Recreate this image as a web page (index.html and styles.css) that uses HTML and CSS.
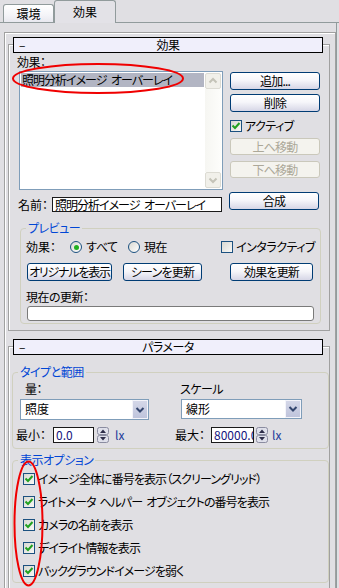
FILE: index.html
```html
<!DOCTYPE html>
<html lang="ja">
<head>
	<title>環境と効果</title>
	<meta charset="UTF-8">
	<link rel="stylesheet" href="styles.css">
</head>
<body>
	<div class="tabs">
		<div class="tab">環境</div>
		<div class="tab active">効果</div>
	</div>

	<div class="panel">
		<div class="page">

			<div class="rollout-title"><span class="dash">–</span><span>効果</span><span></span></div>
			<div class="rollout-body effects">
				<div class="label">効果：</div>
				<div class="effects-main">
					<div class="listbox">
						<div class="list-items">
							<div class="list-item selected">照明分析イメージ オーバーレイ</div>
						</div>
						<div class="vscroll">
							<div class="sbtn"><svg width="14" height="14" viewBox="0 0 14 14"><path d="M3.5 8.5 L7 5 L10.5 8.5" fill="none" stroke="#c4c3b8" stroke-width="2"/></svg></div>
							<div class="strack"></div>
							<div class="sbtn"><svg width="14" height="14" viewBox="0 0 14 14"><path d="M3.5 5.5 L7 9 L10.5 5.5" fill="none" stroke="#c4c3b8" stroke-width="2"/></svg></div>
						</div>
					</div>
					<div class="side">
						<button class="btn">追加...</button>
						<button class="btn gap-s">削除</button>
						<div class="check active-check"><span class="box"><svg width="10" height="10" viewBox="0 0 10 10"><path d="M1.5 4.5 L4 7 L8.5 2" fill="none" stroke="#21a121" stroke-width="2"/></svg></span>アクティブ</div>
						<button class="btn up" disabled>上へ移動</button>
						<button class="btn down" disabled>下へ移動</button>
					</div>
				</div>
				<div class="name-row">
					<div class="name-field">
						<span class="name-label">名前：</span>
						<div class="input name-input">照明分析イメージ オーバーレイ</div>
					</div>
					<button class="btn merge">合成</button>
				</div>

				<fieldset class="group preview">
					<legend>プレビュー</legend>
					<div class="pv-opts">
						<span class="pv-label">効果：</span>
						<span class="radio r-all"><span class="dot on"></span>すべて</span>
						<span class="radio r-cur"><span class="dot"></span>現在</span>
						<span class="check"><span class="box"></span>インタラクティブ</span>
					</div>
					<div class="pv-buttons">
						<button class="btn b-orig">オリジナルを表示</button>
						<button class="btn b-scene">シーンを更新</button>
						<button class="btn b-fx">効果を更新</button>
					</div>
					<div class="label pv-cur">現在の更新：</div>
					<div class="progress"></div>
				</fieldset>
			</div>

			<div class="rollout-title second"><span class="dash">–</span><span>パラメータ</span><span></span></div>
			<div class="rollout-body params">
				<fieldset class="group range">
					<legend>タイプと範囲</legend>
					<div class="range-grid">
						<span class="lbl-amount">量：</span>
						<span class="lbl-scale">スケール</span>
						<div class="select sel-amount">
							<span class="select-text">照度</span>
							<span class="select-arrow"><svg width="10" height="8" viewBox="0 0 10 8"><path d="M1.5 2 L5 5.5 L8.5 2" fill="none" stroke="#34466e" stroke-width="2"/></svg></span>
						</div>
						<div class="select sel-scale">
							<span class="select-text">線形</span>
							<span class="select-arrow"><svg width="10" height="8" viewBox="0 0 10 8"><path d="M1.5 2 L5 5.5 L8.5 2" fill="none" stroke="#34466e" stroke-width="2"/></svg></span>
						</div>
						<div class="spin-row">
							<span class="spin-label">最小：</span>
							<div class="input num n-min">0.0</div>
							<span class="spinner"><svg width="12" height="16" viewBox="0 0 12 16"><rect x="0.5" y="0.5" width="11" height="7" rx="2" fill="#dfe0ea" stroke="#8a8ca0"/><rect x="0.5" y="8.5" width="11" height="7" rx="2" fill="#dfe0ea" stroke="#8a8ca0"/><path d="M3 6 L6 2.5 L9 6 Z" fill="#2c2c48"/><path d="M3 10 L6 13.5 L9 10 Z" fill="#2c2c48"/></svg></span>
							<span class="unit">lx</span>
						</div>
						<div class="spin-row">
							<span class="spin-label max">最大：</span>
							<div class="input num n-max">80000.0</div>
							<span class="spinner s-max"><svg width="12" height="16" viewBox="0 0 12 16"><rect x="0.5" y="0.5" width="11" height="7" rx="2" fill="#dfe0ea" stroke="#8a8ca0"/><rect x="0.5" y="8.5" width="11" height="7" rx="2" fill="#dfe0ea" stroke="#8a8ca0"/><path d="M3 6 L6 2.5 L9 6 Z" fill="#2c2c48"/><path d="M3 10 L6 13.5 L9 10 Z" fill="#2c2c48"/></svg></span>
							<span class="unit u-max">lx</span>
						</div>
					</div>
				</fieldset>

				<fieldset class="group options">
					<legend>表示オプション</legend>
					<div class="opt"><span class="box"><svg width="10" height="10" viewBox="0 0 10 10"><path d="M1.5 4.5 L4 7 L8.5 2" fill="none" stroke="#21a121" stroke-width="2"/></svg></span>イメージ全体に番号を表示（スクリーングリッド）</div>
					<div class="opt"><span class="box"><svg width="10" height="10" viewBox="0 0 10 10"><path d="M1.5 4.5 L4 7 L8.5 2" fill="none" stroke="#21a121" stroke-width="2"/></svg></span>ライトメータ ヘルパー オブジェクトの番号を表示</div>
					<div class="opt"><span class="box"><svg width="10" height="10" viewBox="0 0 10 10"><path d="M1.5 4.5 L4 7 L8.5 2" fill="none" stroke="#21a121" stroke-width="2"/></svg></span>カメラの名前を表示</div>
					<div class="opt"><span class="box"><svg width="10" height="10" viewBox="0 0 10 10"><path d="M1.5 4.5 L4 7 L8.5 2" fill="none" stroke="#21a121" stroke-width="2"/></svg></span>デイライト情報を表示</div>
					<div class="opt"><span class="box"><svg width="10" height="10" viewBox="0 0 10 10"><path d="M1.5 4.5 L4 7 L8.5 2" fill="none" stroke="#21a121" stroke-width="2"/></svg></span>バックグラウンドイメージを弱く</div>
				</fieldset>
			</div>

		</div>
	</div>

	<!-- red marks drawn over the screenshot -->
	<svg class="marks" width="339" height="588" viewBox="0 0 339 588">
		<ellipse cx="98" cy="78.5" rx="85" ry="14.5" fill="none" stroke="#f00000" stroke-width="2"/>
		<ellipse cx="28.5" cy="523.5" rx="14" ry="62" fill="none" stroke="#f00000" stroke-width="2"/>
	</svg>
</body>
</html>
```

FILE: styles.css
```css
* {
	box-sizing: border-box;
}

body {
	margin: 0;
	width: 339px;
	height: 588px;
	overflow: hidden;
	position: relative;
	background-color: #e0dfe3;
	color: #000000;
	font-family: "Noto Sans CJK JP", "Liberation Sans", sans-serif;
	font-size: 12px;
	line-height: 14px;
	letter-spacing: -0.5px;
	font-feature-settings: "palt";
}

button {
	font: inherit;
	letter-spacing: -0.8px;
	font-feature-settings: "palt";
}

/* tabs */

.tabs {
	display: flex;
	align-items: flex-end;
	height: 23px;
	padding-left: 3px;
	border-bottom: 1px solid #919b9c;
}

.tab {
	width: 51px;
	height: 18px;
	border: 1px solid #919b9c;
	border-bottom: none;
	border-radius: 3px 3px 0 0;
	background: linear-gradient(#ffffff, #f4f4f8 60%, #e8e8ef);
	text-align: center;
	line-height: 18px;
	letter-spacing: 0;
}

.tab.active {
	width: 62px;
	height: 23px;
	margin-bottom: -1px;
	background: #e3e2e7;
	line-height: 22px;
}

.panel {
	width: 337px;
	height: 565px;
	padding-top: 9px;
	border-right: 1px solid #919b9c;
}

.page {
	margin-left: 4px;
	width: 332px;
	height: 556px;
	padding-top: 4px;
	border: 1px solid #a0a0a0;
	border-bottom: none;
	box-shadow: inset 1px 1px 0 #ffffff;
}

/* rollouts */

.rollout-title {
	position: relative;
	z-index: 1;
	display: grid;
	grid-template-columns: 20px 1fr 20px;
	margin-left: 8px;
	width: 310px;
	height: 16px;
	border: 1px solid #000000;
	background-color: #f0effb;
	text-align: center;
}

.rollout-title .dash {
	text-align: left;
	padding-left: 5px;
}

.rollout-title.second {
	margin-top: 8px;
}

.rollout-body {
	width: 322px;
	margin: -9px 0 0 3px;
	border: 1px solid #a0a0a0;
	box-shadow: inset 1px 1px 0 #ffffff;
}

.effects {
	padding: 10px 0 6px 8px;
}

.params {
	height: 242px;
	border-bottom: none;
	padding: 18px 0 0 3px;
}

.label {
	height: 14px;
}

/* effect list */

.effects-main {
	display: flex;
	margin-top: 2px;
}

.listbox {
	display: flex;
	width: 204px;
	height: 119px;
	margin-left: 2px;
	border: 1px solid #7f9db9;
	background-color: #ffffff;
}

.list-items {
	flex: 1;
	min-width: 0;
	padding: 1px;
}

.list-item {
	height: 14px;
	padding-left: 1px;
	white-space: nowrap;
	letter-spacing: -1px;
	word-spacing: 3px;
}

.list-item.selected {
	background-color: #b2b5c3;
}

.vscroll {
	display: flex;
	flex-direction: column;
	width: 16px;
	margin-right: 1px;
	padding: 1px 0;
}

.sbtn {
	display: flex;
	align-items: center;
	justify-content: center;
	height: 16px;
	border: 1px solid #dcdbd3;
	border-radius: 2px;
	background-color: #f1f0ea;
}

.strack {
	flex: 1;
	background: linear-gradient(to right, #f6f6f2, #fdfdfb);
}

.side {
	display: flex;
	flex-direction: column;
	width: 90px;
	margin-left: 7px;
	padding-top: 1px;
}

.btn {
	display: block;
	width: 100%;
	height: 18px;
	padding: 0;
	border: 1px solid #003c74;
	border-radius: 3px;
	background: linear-gradient(#ffffff, #f6f6fa 45%, #d6d6e6);
	color: #000000;
	line-height: 16px;
	white-space: nowrap;
	overflow: hidden;
}

.btn:disabled {
	height: 17px;
	border-color: #cac8bb;
	background: #f4f3ee;
	color: #aca899;
}

.gap-s {
	margin-top: 4px;
}

.btn.up {
	margin-top: 5px;
}

.btn.down {
	margin-top: 6px;
}

.check {
	display: flex;
	align-items: center;
	gap: 3px;
	height: 14px;
	white-space: nowrap;
}

.active-check {
	margin-top: 7px;
}

.box {
	display: flex;
	align-items: center;
	justify-content: center;
	flex: none;
	width: 12px;
	height: 12px;
	border: 1px solid #1c5180;
	background: linear-gradient(135deg, #d8d8d2, #f8f8f6);
}

/* name */

.name-row {
	display: flex;
	margin-top: 2px;
}

.name-field {
	display: flex;
	align-items: center;
	margin-top: 5px;
}

.name-label {
	width: 35px;
	padding-left: 1px;
	letter-spacing: 0;
}

.input {
	height: 15px;
	border: 1px solid #1a1a1a;
	background-color: #ffffff;
	padding-left: 2px;
	line-height: 13px;
	white-space: nowrap;
	overflow: hidden;
}

.name-input {
	width: 170px;
	letter-spacing: -1px;
	word-spacing: 3px;
}

.btn.merge {
	width: 90px;
	margin-left: 7px;
}

/* group boxes */

.group {
	margin: 0;
	border: 1px solid #d0d0bf;
	border-radius: 4px;
	min-width: 0;
}

.group legend {
	padding: 0 2px;
	color: #0046d5;
	line-height: 14px;
}

.preview {
	width: 301px;
	margin: 9px 0 0 3px;
	padding: 5px 5px 2px 5px;
}

.pv-opts {
	display: flex;
	align-items: center;
	height: 14px;
}

.pv-label {
	width: 46px;
	letter-spacing: 0;
}

.radio {
	display: flex;
	align-items: center;
	gap: 4px;
}

.r-all {
	width: 60px;
}

.r-cur {
	width: 97px;
}

.dot {
	display: flex;
	align-items: center;
	justify-content: center;
	width: 12px;
	height: 12px;
	border: 1px solid #1c5180;
	border-radius: 50%;
	background: linear-gradient(135deg, #d8d8d2, #ffffff);
}

.dot.on::after {
	content: "";
	width: 5px;
	height: 5px;
	border-radius: 50%;
	background-color: #21b021;
}

.pv-buttons {
	display: flex;
	margin-top: 9px;
}

.b-orig {
	width: 85px;
	margin-left: 1px;
	letter-spacing: -1.2px;
}

.b-scene {
	width: 79px;
	margin-left: 11px;
}

.b-fx {
	width: 83px;
	margin-left: 28px;
}

.pv-cur {
	margin-top: 9px;
}

.progress {
	width: 287px;
	height: 15px;
	margin: 2px 0 0 1px;
	border: 1px solid #7a7a7a;
	border-radius: 3px;
	background-color: #ffffff;
}

/* parameters */

.range {
	width: 317px;
	padding: 3px 0 5px 3px;
}

.range legend {
	margin-left: 2px;
}

.range-grid {
	display: grid;
	grid-template-columns: 159px 1fr;
}

.lbl-amount {
	margin-left: 9px;
}

.lbl-scale {
	margin-left: 5px;
}

.select {
	display: flex;
	margin-top: 3px;
	border: 1px solid #7f9db9;
	background-color: #ffffff;
}

.sel-amount {
	width: 129px;
	height: 21px;
	margin-left: 4px;
}

.sel-scale {
	width: 121px;
	height: 20px;
	margin-left: 6px;
}

.select-text {
	flex: 1;
	padding-left: 4px;
	line-height: 18px;
	letter-spacing: 0;
}

.select-arrow {
	display: flex;
	align-items: center;
	justify-content: center;
	width: 16px;
	border: 1px solid #f4f4fa;
	background: linear-gradient(#d4d7e8, #bfc4dc);
}

.spin-row {
	display: flex;
	align-items: center;
	height: 16px;
	margin-top: 7px;
}

.spin-label {
	width: 37px;
	letter-spacing: 0;
}

.spin-label.max {
	width: 36px;
}

.num {
	height: 16px;
	color: #14147e;
	line-height: 14px;
	letter-spacing: 0;
}

.n-min {
	width: 41px;
}

.n-max {
	width: 43px;
}

.spinner {
	display: flex;
	margin-left: 3px;
}

.s-max {
	margin-left: 2px;
}

.unit {
	margin-left: 6px;
	color: #1f3b9a;
	letter-spacing: 0;
}

.u-max {
	margin-left: 4px;
}

.options {
	width: 317px;
	margin: 4px 0 0 0;
	padding: 0 0 0 10px;
}

.options legend {
	margin-left: -5px;
}

.opt {
	display: flex;
	align-items: center;
	gap: 3px;
	height: 23px;
	white-space: nowrap;
	letter-spacing: -0.9px;
	word-spacing: 2px;
}

.marks {
	position: absolute;
	left: 0;
	top: 0;
	pointer-events: none;
}
```
